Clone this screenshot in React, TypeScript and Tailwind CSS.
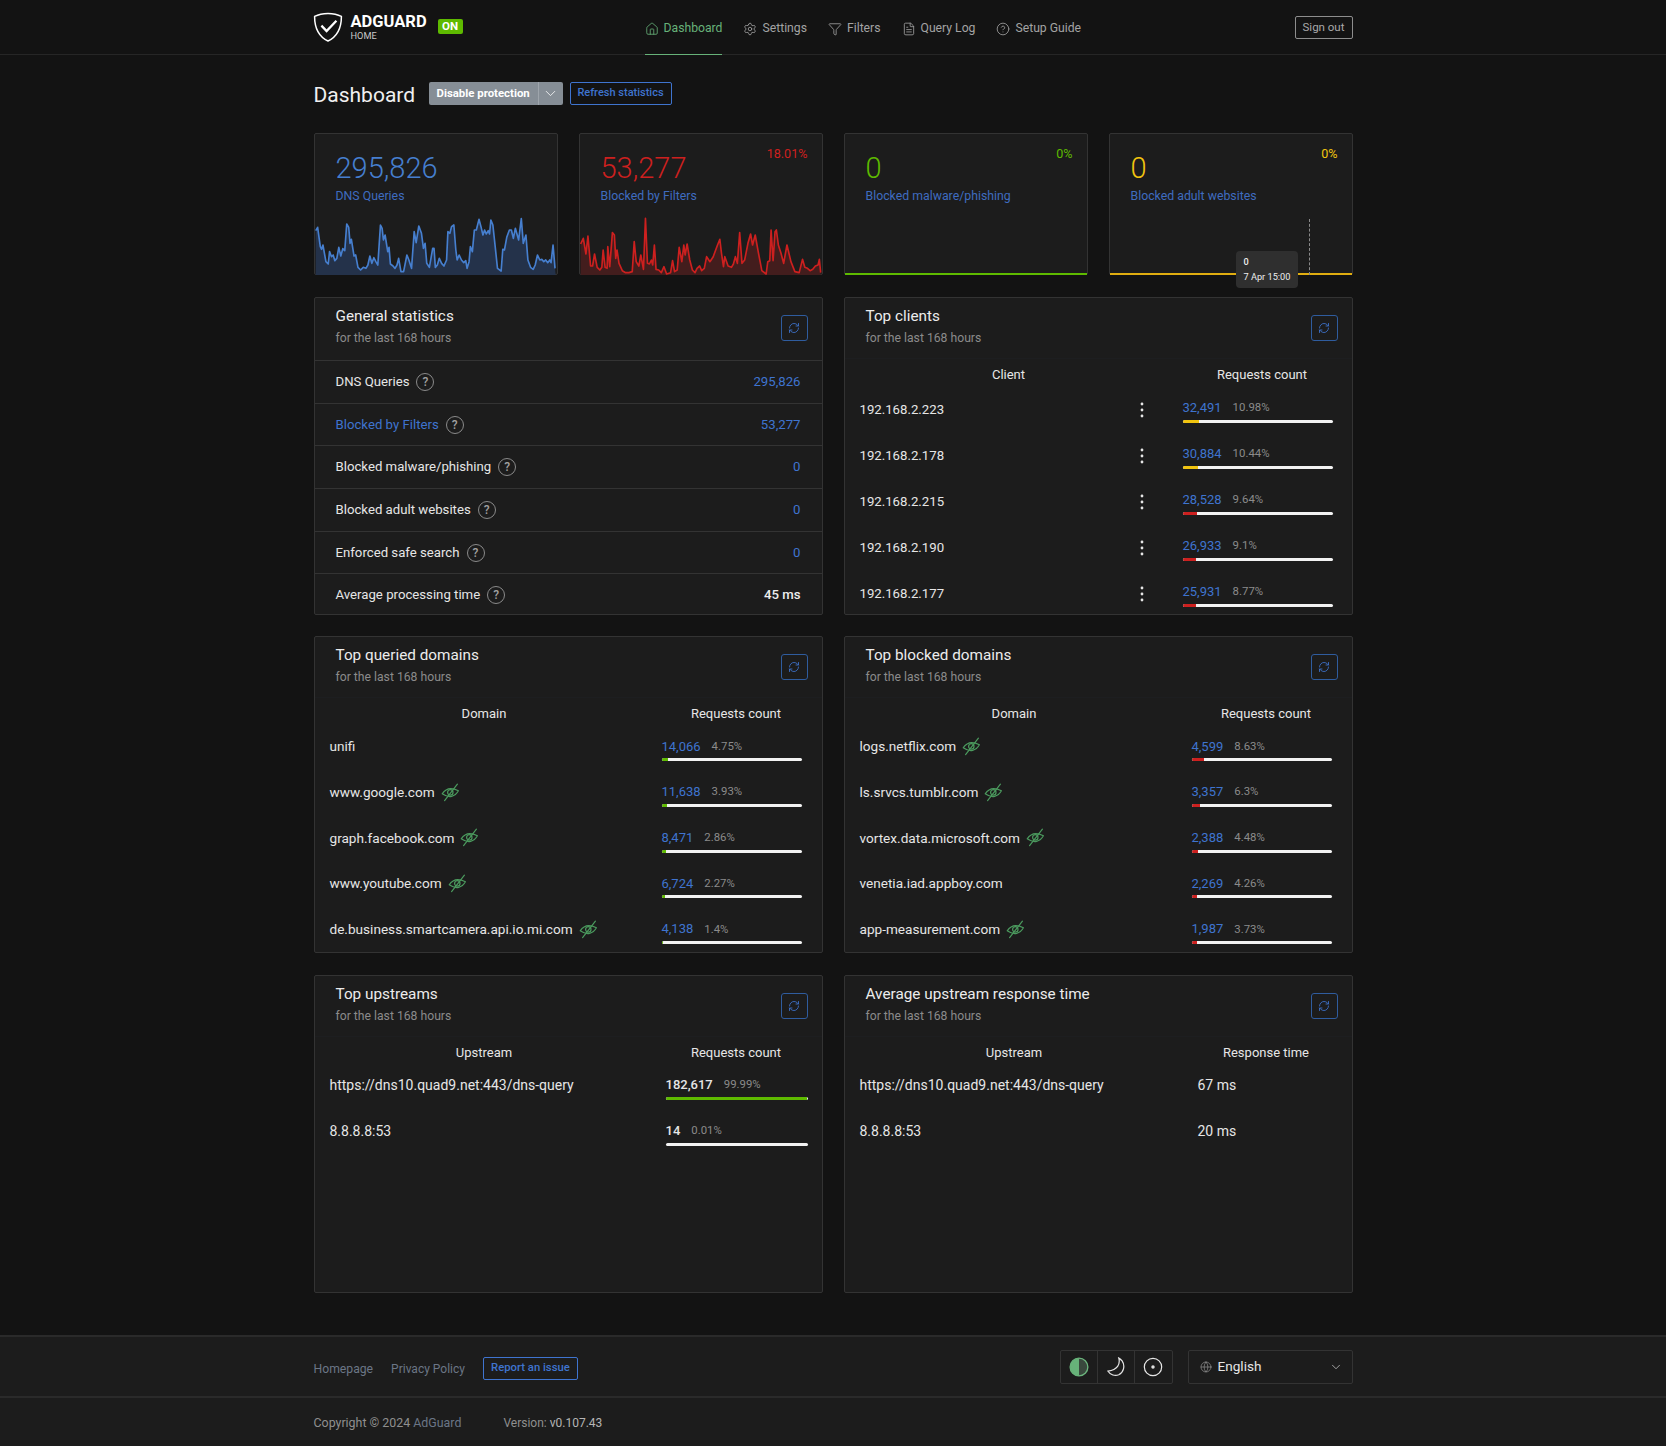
import React from "react";
import { House, Settings, Filter, FileText, CircleHelp, RefreshCw, ChevronDown, Globe } from "lucide-react";

const bluePts =
  "14,62 20,52 28,110 32,118 36,105 45,155 52,162 56,125 62,140 67,135 72,152 78,145 84,112 90,138 96,116 102,122 108,42 114,52 118,100 122,88 130,138 135,135 142,172 150,180 158,172 166,175 172,165 178,138 184,160 190,143 196,155 202,165 210,45 215,55 219,90 224,75 232,125 236,112 240,162 248,168 254,175 260,165 265,145 272,185 280,185 290,135 296,150 304,175 312,65 318,98 326,48 334,70 340,115 345,100 350,160 358,172 368,115 372,115 376,172 382,165 388,145 395,160 402,168 410,150 414,65 420,70 425,50 432,45 438,120 442,150 448,135 455,150 462,158 468,152 472,175 478,155 482,110 488,125 494,60 500,60 508,28 514,50 520,75 525,60 530,72 536,62 540,72 544,30 550,45 556,100 564,175 575,183 580,118 585,120 592,82 600,60 606,60 612,85 618,55 628,90 636,26 642,100 650,75 656,150 664,172 672,178 678,165 685,135 692,150 698,148 704,155 710,150 716,158 722,150 726,158 732,105 738,175";
const redPts =
  "14,102 22,85 30,132 36,78 44,168 50,168 56,132 64,172 72,180 78,172 82,120 88,172 94,175 96,110 102,170 110,68 116,75 120,145 124,120 130,160 140,182 150,188 160,188 170,185 176,95 182,155 190,168 196,135 204,178 210,25 216,160 222,162 228,150 232,165 237,105 242,178 250,180 258,188 266,170 274,192 286,188 292,152 298,185 306,180 312,112 320,155 326,105 330,135 336,102 344,150 352,180 360,188 366,175 374,168 380,182 388,175 395,140 405,155 415,140 428,105 435,88 440,130 446,170 450,140 460,168 470,172 476,162 482,140 488,160 495,68 502,160 510,150 520,100 528,72 534,105 542,75 552,130 562,182 575,192 580,155 586,152 590,60 596,152 602,65 606,60 612,105 620,130 628,160 638,105 650,155 662,185 675,188 685,148 692,172 700,175 708,182 716,178 724,168 732,165 736,148 740,188";

function Spark({ pts, stroke, fill }: { pts: string; stroke: string; fill: string }) {
  return (
    <svg viewBox="12 0 732 195" preserveAspectRatio="none" className="block w-full h-[65px]">
      <polygon points={`14,195 ${pts} 740,195`} fill={fill} />
      <polyline points={pts} fill="none" stroke={stroke} strokeWidth="5" strokeLinejoin="round" />
    </svg>
  );
}

function StatCard({
  value, label, pct, color, chart, children,
}: { value: string; label: string; pct?: string; color: string; chart: React.ReactNode; children?: React.ReactNode }) {
  return (
    <div className="relative h-[142px] flex flex-col bg-[#1c1c1c] border border-[#333333] rounded-[2px]">
      <div className="px-[21px] pt-[17px] flex justify-between items-start">
        <div>
          <div className="text-[29px] leading-[35px] font-light" style={{ color }}>{value}</div>
          <div className="text-[12.3px] leading-[18px] text-[#3f6cc0] mt-[1px]">{label}</div>
        </div>
        <div className="text-[12.6px] leading-[18px] -mr-[7px] -mt-[6px]" style={{ color }}>{pct}</div>
      </div>
      <div className="mt-auto -mb-[1px]">{chart}</div>
      {children}
    </div>
  );
}

function Help() {
  return (
    <span className="ml-[7px] inline-flex items-center justify-center w-[18px] h-[18px] rounded-full border border-[#8a8a8a] text-[12px] leading-none font-medium text-[#a0a0a0]">?</span>
  );
}

function Refresh() {
  return (
    <button className="w-[27px] h-[26px] flex items-center justify-center border border-[#2f5c9e] rounded-[3px] text-[#3f74cf]">
      <RefreshCw size={12} strokeWidth={1.7} />
    </button>
  );
}

function CardHead({ title }: { title: string }) {
  return (
    <div className="flex justify-between items-start pl-[21px] pr-[14px] pt-[6px]">
      <div>
        <div className="text-[15.3px] leading-[24px] text-[#ececec]">{title}</div>
        <div className="text-[12.2px] leading-[20px] text-[#8b8b8b]">for the last 168 hours</div>
      </div>
      <div className="mt-[11px]"><Refresh /></div>
    </div>
  );
}

function EyeOff() {
  return (
    <svg width="19" height="19" viewBox="0 0 19 19" fill="none" stroke="#4b9a5e" strokeWidth="1.2" className="ml-[6px] shrink-0" strokeLinecap="round" strokeLinejoin="round">
      <path d="M1.2 10.8 C4.5 5.8 9.6 3.6 17.4 7.8 C14 13.8 8.2 15.6 1.2 10.8 Z" />
      <circle cx="9.3" cy="9.4" r="2.7" />
      <path d="M3.6 17.6 L16.4 1.2" />
    </svg>
  );
}

function Count({ n, pct, color, col = "#3f74cf", medium, }: { n: string; pct: string; color: string; col?: string; medium?: boolean }) {
  const w = parseFloat(pct);
  return (
    <div className="w-full">
      <div className="flex items-center h-[18px] text-[13px]">
        <span className={medium ? "font-medium" : ""} style={{ color: col }}>{n}</span>
        <span className="ml-[11px] text-[11.4px] text-[#8b8b8b]">{pct}</span>
      </div>
      <div className="mt-[3px] h-[3px] bg-[#f2f2f2] rounded-[2px] overflow-hidden">
        <div className="h-full" style={{ width: `${w}%`, background: color }} />
      </div>
    </div>
  );
}

function GeneralRow({ label, value, link, bold }: { label: string; value: string; link?: boolean; bold?: boolean }) {
  return (
    <div className="flex items-center justify-between h-[42.7px] border-t border-[#333333] pl-[21px] pr-[21px] text-[13.2px]">
      <div className="flex items-center">
        <span className={link ? "text-[#3f74cf]" : "text-[#e6e6e6]"}>{label}</span>
        <Help />
      </div>
      <span className={bold ? "text-[#eeeeee] font-medium" : "text-[#3f74cf]"}>{value}</span>
    </div>
  );
}

function Card({ children }: { children: React.ReactNode }) {
  return <div className="bg-[#1c1c1c] border border-[#333333] rounded-[2px] overflow-hidden">{children}</div>;
}

function Thead({ a, b, cols, pad }: { a: string; b: string; cols: string; pad?: boolean }) {
  return (
    <div className={`grid ${cols} mt-[10px] border-t border-[#1d1e20] h-[32px] items-center text-[13px] text-[#e6e6e6] text-center`}>
      <div className={pad ? "pl-[3px]" : ""}>{a}</div>
      <div>{b}</div>
    </div>
  );
}

function DomainTable({ rows, color }: { rows: [string, string, string, boolean][]; color: string }) {
  return (
    <>
      <Thead a="Domain" b="Requests count" cols="grid-cols-[1fr_171px]" pad />
      {rows.map(([d, n, p, eye]) => (
        <div key={d} className="grid grid-cols-[1fr_171px] h-[45.7px] items-center text-[13.6px]">
          <div className="flex items-center pl-[15px] text-[#e6e6e6] -mt-[11px]">
            {d}{eye && <EyeOff />}
          </div>
          <div className="pl-[11px] pr-[20px] -mt-[5px]"><Count n={n} pct={p} color={color} /></div>
        </div>
      ))}
    </>
  );
}

const clients: [string, string, string, string][] = [
  ["192.168.2.223", "32,491", "10.98%", "#f1c40f"],
  ["192.168.2.178", "30,884", "10.44%", "#f1c40f"],
  ["192.168.2.215", "28,528", "9.64%", "#cd201f"],
  ["192.168.2.190", "26,933", "9.1%", "#cd201f"],
  ["192.168.2.177", "25,931", "8.77%", "#cd201f"],
];

const queried: [string, string, string, boolean][] = [
  ["unifi", "14,066", "4.75%", false],
  ["www.google.com", "11,638", "3.93%", true],
  ["graph.facebook.com", "8,471", "2.86%", true],
  ["www.youtube.com", "6,724", "2.27%", true],
  ["de.business.smartcamera.api.io.mi.com", "4,138", "1.4%", true],
];
const blocked: [string, string, string, boolean][] = [
  ["logs.netflix.com", "4,599", "8.63%", true],
  ["ls.srvcs.tumblr.com", "3,357", "6.3%", true],
  ["vortex.data.microsoft.com", "2,388", "4.48%", true],
  ["venetia.iad.appboy.com", "2,269", "4.26%", false],
  ["app-measurement.com", "1,987", "3.73%", true],
];

function NavItem({ icon, label, active }: { icon: React.ReactNode; label: string; active?: boolean }) {
  return (
    <div className={`flex items-center h-[55px] pt-[3px] gap-[5px] text-[12.2px] border-b ${active ? "text-[#67b279] border-[#67b279]" : "text-[#a3a3a3] border-transparent"}`}>
      {icon}
      <span>{label}</span>
    </div>
  );
}

function Logo() {
  return (
    <svg width="30" height="30" viewBox="0 0 30 30" fill="none" className="shrink-0 -ml-[1px]">
      <path d="M15 1.4 C9.5 1.4 5 2.6 1.6 4.4 C1.6 15 4.8 24 15 29 C25.2 24 28.4 15 28.4 4.4 C25 2.6 20.5 1.4 15 1.4 Z" stroke="#ffffff" strokeWidth="1.5" strokeLinejoin="round" />
      <path d="M8.4 13.6 L13.6 19 L23.4 8.8" stroke="#ffffff" strokeWidth="2.3" />
    </svg>
  );
}

export default function App() {
  const thin = 1.4;
  return (
    <div className="font-['Roboto','Noto_Sans',sans-serif] bg-[#131313] h-[1446px] flex flex-col">
      <header className="h-[55px] border-b border-[#262626] shrink-0">
        <div className="w-[1039px] mx-auto flex items-start h-[55px] relative">
          <div className="flex items-center h-[54px] w-[331px]">
            <Logo />
            <div className="ml-[8px] mt-[1px]">
              <div className="text-[16.5px] leading-[16px] font-bold text-white">ADGUARD</div>
              <div className="text-[9.2px] leading-[11px] text-[#c9c9c9]">HOME</div>
            </div>
            <div className="ml-[11px] -mt-[1px] h-[15px] w-[25px] flex items-center justify-center bg-[#5eba00] rounded-[2px] text-white text-[11.5px] font-bold">ON</div>
          </div>
          <nav className="flex gap-[21px]">
            <NavItem active icon={<House size={14} strokeWidth={thin} />} label="Dashboard" />
            <NavItem icon={<Settings size={14} strokeWidth={thin} />} label="Settings" />
            <NavItem icon={<Filter size={14} strokeWidth={thin} />} label="Filters" />
            <NavItem icon={<FileText size={14} strokeWidth={thin} />} label="Query Log" />
            <NavItem icon={<CircleHelp size={14} strokeWidth={thin} />} label="Setup Guide" />
          </nav>
          <button className="ml-auto mt-[16px] w-[58px] h-[23px] border border-[#8d8d8d] rounded-[2px] text-[11.5px] text-[#a9a9a9]">Sign out</button>
        </div>
      </header>

      <main className="w-[1039px] mx-auto flex-1">
        <div className="flex items-center h-[24px] mt-[26px]">
          <h1 className="text-[21px] leading-none text-[#f0f0f0] font-normal w-[115px] mt-[5px]">Dashboard</h1>
          <div className="flex h-[23px] bg-[#868e96] rounded-[2px] text-[11.4px] font-bold text-white">
            <span className="pl-[8px] pt-[1px] w-[109px] flex items-center whitespace-nowrap">Disable protection</span>
            <span className="w-[25px] border-l border-[#9ea5ac] flex items-center justify-center"><ChevronDown size={17} strokeWidth={1.1} /></span>
          </div>
          <button className="ml-[7px] h-[23px] w-[102px] pt-[1px] border border-[#3f74cf] rounded-[2px] text-[11px] font-medium text-[#3f74cf]">Refresh statistics</button>
        </div>

        <div className="grid grid-cols-4 gap-x-[21px] mt-[28px]">
          <StatCard value="295,826" label="DNS Queries" color="#467fcf" chart={<Spark pts={bluePts} stroke="#467fcf" fill="#24324a" />} />
          <StatCard value="53,277" label="Blocked by Filters" pct="18.01%" color="#cd201f" chart={<Spark pts={redPts} stroke="#cd201f" fill="#431d1d" />} />
          <StatCard value="0" label="Blocked malware/phishing" pct="0%" color="#5eba00" chart={<div className="h-[2px] bg-[#5eba00]" />} />
          <StatCard value="0" label="Blocked adult websites" pct="0%" color="#f1c40f" chart={<div className="h-[2px] bg-[#e0ad10]" />}>
            <div className="absolute left-[199px] top-[85px] h-[56px] border-l border-dashed border-[#8a8a8a]" />
            <div className="absolute left-[126px] top-[117px] w-[62px] h-[37px] bg-[#2f2f2f] rounded-[4px] px-[8px] pt-[3px] text-[9.2px] leading-[15px] text-[#eeeeee]">
              <div className="font-medium">0</div>
              <div className="whitespace-nowrap">7 Apr 15:00</div>
            </div>
          </StatCard>
        </div>

        <div className="grid grid-cols-2 gap-x-[21px] gap-y-[22px] mt-[22px]">
          <div className="h-[317px]">
            <Card>
              <div className="h-[316px]">
                <CardHead title="General statistics" />
                <div className="h-[12px]" />
                <GeneralRow label="DNS Queries" value="295,826" />
                <GeneralRow label="Blocked by Filters" value="53,277" link />
                <GeneralRow label="Blocked malware/phishing" value="0" />
                <GeneralRow label="Blocked adult websites" value="0" />
                <GeneralRow label="Enforced safe search" value="0" />
                <GeneralRow label="Average processing time" value="45 ms" bold />
              </div>
            </Card>
          </div>

          <div className="h-[317px]">
            <Card>
              <div className="h-[316px]">
                <CardHead title="Top clients" />
                <Thead a="Client" b="Requests count" cols="grid-cols-[328px_1fr]" />
                <div className="h-[3px]" />
                {clients.map(([ip, n, p, c]) => (
                  <div key={ip} className="grid grid-cols-[328px_1fr] h-[46px] items-center text-[13.2px]">
                    <div className="flex items-center justify-between pl-[15px] pr-[29px] text-[#e6e6e6] -mt-[12px]">
                      <span>{ip}</span>
                      <svg width="4" height="16" viewBox="0 0 4 16" fill="#e6e6e6"><circle cx="2" cy="2" r="1.4" /><circle cx="2" cy="8" r="1.4" /><circle cx="2" cy="14" r="1.4" /></svg>
                    </div>
                    <div className="pl-[10px] pr-[19px] -mt-[10px]"><Count n={n} pct={p} color={c} /></div>
                  </div>
                ))}
              </div>
            </Card>
          </div>

          <div className="h-[317px]">
            <Card>
              <div className="h-[315px]">
                <CardHead title="Top queried domains" />
                <DomainTable rows={queried} color="#5eba00" />
              </div>
            </Card>
          </div>

          <div className="h-[317px]">
            <Card>
              <div className="h-[315px]">
                <CardHead title="Top blocked domains" />
                <DomainTable rows={blocked} color="#cd201f" />
              </div>
            </Card>
          </div>

          <div className="h-[317px]">
            <Card>
              <div className="h-[316px]">
                <CardHead title="Top upstreams" />
                <Thead a="Upstream" b="Requests count" cols="grid-cols-[1fr_171px]" pad />
                {[
                  ["https://dns10.quad9.net:443/dns-query", "182,617", "99.99%"],
                  ["8.8.8.8:53", "14", "0.01%"],
                ].map(([u, n, p]) => (
                  <div key={u} className="grid grid-cols-[1fr_171px] h-[46px] items-center text-[14px]">
                    <div className="pl-[15px] text-[#e6e6e6] -mt-[11px]">{u}</div>
                    <div className="pl-[15px] pr-[14px] -mt-[6px]"><Count n={n} pct={p} color="#5eba00" col="#e6e6e6" medium /></div>
                  </div>
                ))}
              </div>
            </Card>
          </div>

          <div className="h-[317px]">
            <Card>
              <div className="h-[316px]">
                <CardHead title="Average upstream response time" />
                <Thead a="Upstream" b="Response time" cols="grid-cols-[1fr_171px]" pad />
                {[
                  ["https://dns10.quad9.net:443/dns-query", "67 ms"],
                  ["8.8.8.8:53", "20 ms"],
                ].map(([u, t]) => (
                  <div key={u} className="grid grid-cols-[1fr_171px] h-[46px] items-center text-[14px] text-[#e6e6e6]">
                    <div className="pl-[15px] -mt-[11px]">{u}</div>
                    <div className="pl-[17px] -mt-[11px]">{t}</div>
                  </div>
                ))}
              </div>
            </Card>
          </div>
        </div>
      </main>

      <footer className="bg-[#1c1c1c] shrink-0">
        <div className="h-[63px] border-t-2 border-b-2 border-[#2a2a2a]">
          <div className="w-[1039px] mx-auto flex items-center h-full">
            <a className="text-[12.2px] text-[#6b7686] mt-[5px]">Homepage</a>
            <a className="ml-[18px] text-[12px] text-[#6b7686] mt-[5px]">Privacy Policy</a>
            <button className="ml-[18px] h-[23px] w-[95px] border border-[#3f74cf] rounded-[2px] text-[11.3px] font-medium text-[#3f74cf] mt-[4px]">Report an issue</button>
            <div className="ml-auto flex h-[34px] border border-[#333333] rounded-[2px]">
              <div className="w-[37px] flex items-center justify-center border-r border-[#333333]">
                <svg width="20" height="20" viewBox="0 0 18 18"><circle cx="9" cy="9" r="8" fill="none" stroke="#67b279" strokeWidth="1.2" /><path d="M9 1 A8 8 0 0 0 9 17 Z" fill="#67b279" /><path d="M9 1 A8 8 0 0 1 9 17" fill="#8fcba0" opacity="0.25" /></svg>
              </div>
              <div className="w-[37px] flex items-center justify-center border-r border-[#333333]">
                <svg width="20" height="20" viewBox="0 0 18 18" fill="none" stroke="#e6e6e6" strokeWidth="1.1"><path d="M11.5 1 C13 6.5 10.5 11.5 1.8 12.8 C4 16.2 8 17.5 11.5 16 C15.8 14 17.5 8 14.5 3.5 C13.6 2.4 12.6 1.6 11.5 1 Z" /></svg>
              </div>
              <div className="w-[37px] flex items-center justify-center">
                <svg width="20" height="20" viewBox="0 0 18 18" fill="none" stroke="#e6e6e6" strokeWidth="1.1"><circle cx="9" cy="9" r="7.8" /><circle cx="9" cy="9" r="1" fill="#e6e6e6" /></svg>
              </div>
            </div>
            <div className="ml-[15px] w-[165px] h-[34px] border border-[#333333] rounded-[2px] flex items-center pl-[11px] pr-[9px] text-[13.6px] text-[#e6e6e6]">
              <Globe size={12} strokeWidth={1.2} className="text-[#a3a3a3]" />
              <span className="ml-[6px]">English</span>
              <ChevronDown size={14} strokeWidth={1.3} className="ml-auto text-[#c9c9c9]" />
            </div>
          </div>
        </div>
        <div className="h-[48px] pt-[2px]">
          <div className="w-[1039px] mx-auto flex items-center h-full text-[12.4px] text-[#8f8f8f]">
            <span>Copyright © 2024 <span className="text-[#6b7686]">AdGuard</span></span>
            <span className="ml-[42px] text-[12px]">Version: <span className="text-[#b5b5b5]">v0.107.43</span></span>
          </div>
        </div>
      </footer>
    </div>
  );
}
